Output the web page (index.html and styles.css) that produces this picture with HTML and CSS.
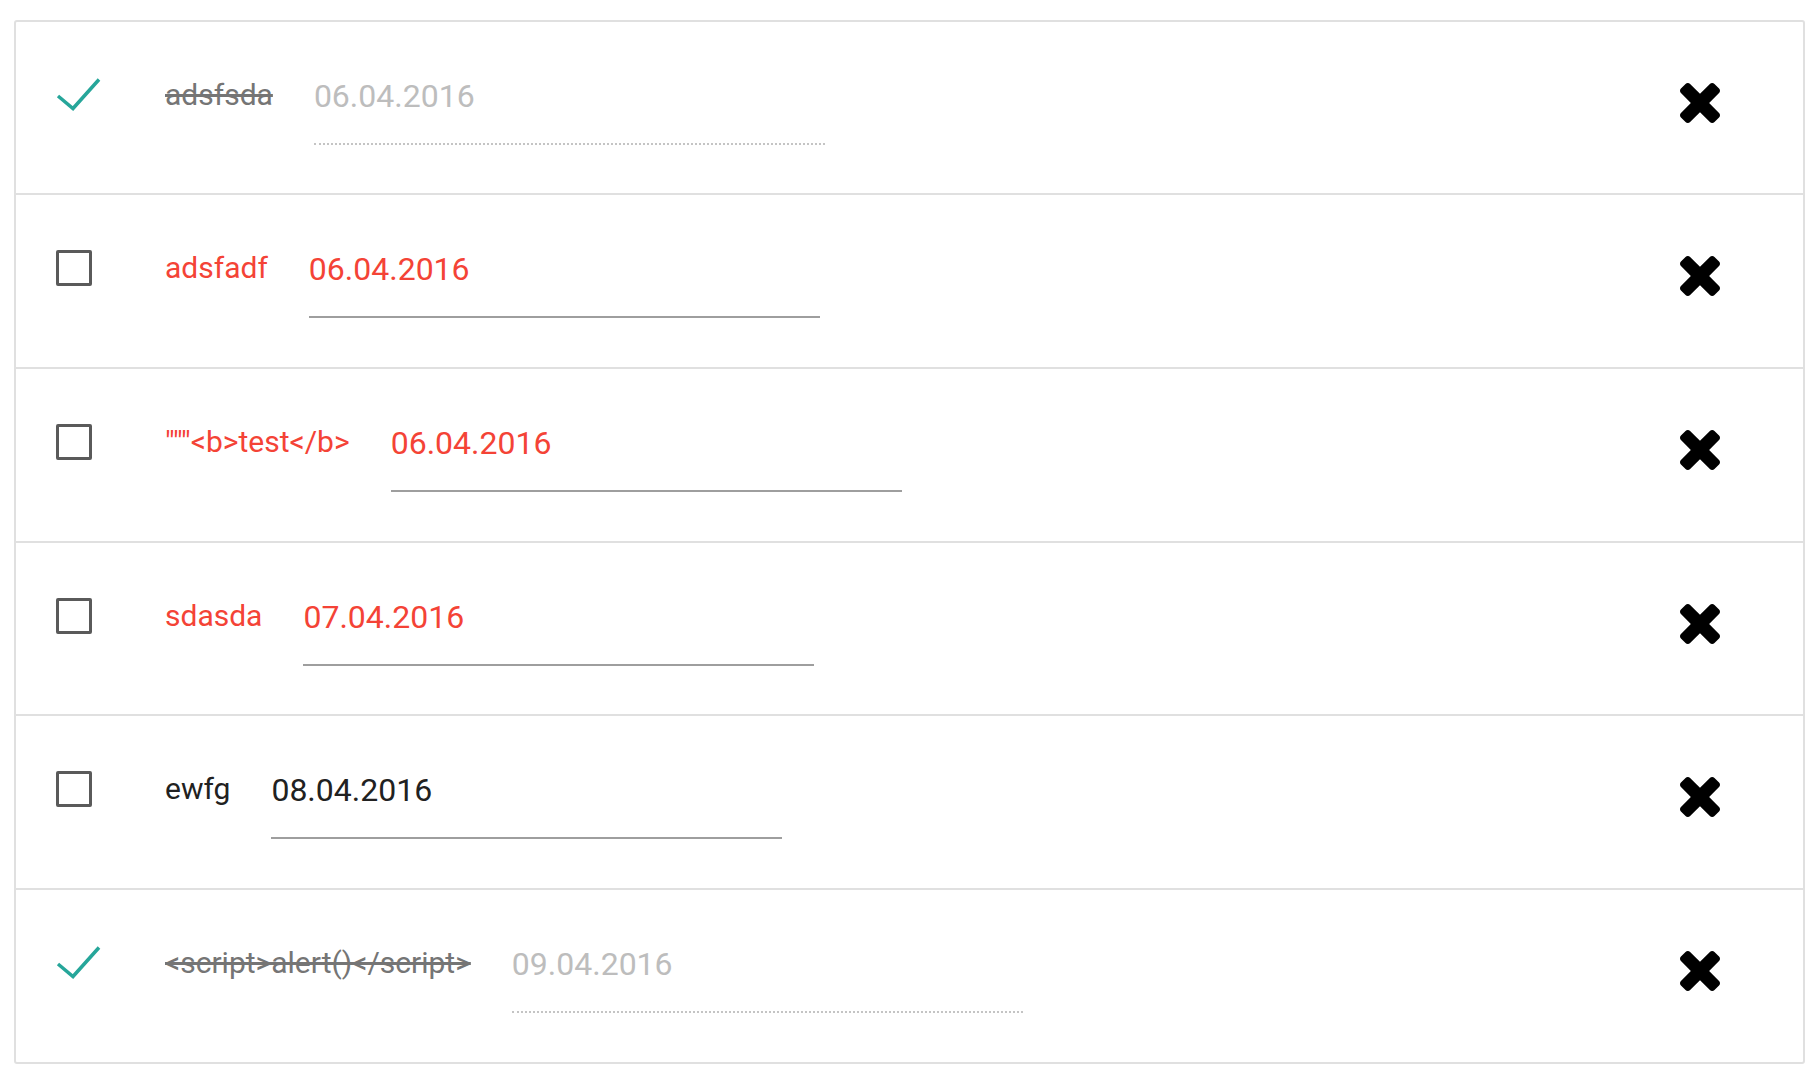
FILE: index.html
```html
<!DOCTYPE html>
<html lang="en">
<head>
<meta charset="utf-8">
<title>Todo list</title>
<link rel="stylesheet" href="styles.css">
</head>
<body>
<ul class="todo-list">
  <li class="todo done">
    <div class="toggle">
      <svg class="check" width="48" height="36" viewBox="0 0 48 36"><polyline points="4,20 19,32.5 45,3.5" fill="none" stroke="#26a69a" stroke-width="3.5" stroke-linejoin="miter"/></svg>
    </div>
    <span class="title">adsfsda</span>
    <div class="date-field"><span class="date">06.04.2016</span></div>
    <button class="remove" type="button" aria-label="Remove"><svg width="40" height="40" viewBox="110 366 1188 1188"><path d="M1298 1322q0 40-28 68l-136 136q-28 28-68 28t-68-28l-294-294-294 294q-28 28-68 28t-68-28l-136-136q-28-28-28-68t28-68l294-294-294-294q-28-28-28-68t28-68l136-136q28-28 68-28t68 28l294 294 294-294q28-28 68-28t68 28l136 136q28 28 28 68t-28 68l-294 294 294 294q28 28 28 68z"/></svg></button>
  </li>
  <li class="todo overdue">
    <div class="toggle"><span class="box"></span></div>
    <span class="title">adsfadf</span>
    <div class="date-field"><span class="date">06.04.2016</span></div>
    <button class="remove" type="button" aria-label="Remove"><svg width="40" height="40" viewBox="110 366 1188 1188"><path d="M1298 1322q0 40-28 68l-136 136q-28 28-68 28t-68-28l-294-294-294 294q-28 28-68 28t-68-28l-136-136q-28-28-28-68t28-68l294-294-294-294q-28-28-28-68t28-68l136-136q28-28 68-28t68 28l294 294 294-294q28-28 68-28t68 28l136 136q28 28 28 68t-28 68l-294 294 294 294q28 28 28 68z"/></svg></button>
  </li>
  <li class="todo overdue">
    <div class="toggle"><span class="box"></span></div>
    <span class="title">"""&lt;b&gt;test&lt;/b&gt;</span>
    <div class="date-field"><span class="date">06.04.2016</span></div>
    <button class="remove" type="button" aria-label="Remove"><svg width="40" height="40" viewBox="110 366 1188 1188"><path d="M1298 1322q0 40-28 68l-136 136q-28 28-68 28t-68-28l-294-294-294 294q-28 28-68 28t-68-28l-136-136q-28-28-28-68t28-68l294-294-294-294q-28-28-28-68t28-68l136-136q28-28 68-28t68 28l294 294 294-294q28-28 68-28t68 28l136 136q28 28 28 68t-28 68l-294 294 294 294q28 28 28 68z"/></svg></button>
  </li>
  <li class="todo overdue">
    <div class="toggle"><span class="box"></span></div>
    <span class="title">sdasda</span>
    <div class="date-field"><span class="date">07.04.2016</span></div>
    <button class="remove" type="button" aria-label="Remove"><svg width="40" height="40" viewBox="110 366 1188 1188"><path d="M1298 1322q0 40-28 68l-136 136q-28 28-68 28t-68-28l-294-294-294 294q-28 28-68 28t-68-28l-136-136q-28-28-28-68t28-68l294-294-294-294q-28-28-28-68t28-68l136-136q28-28 68-28t68 28l294 294 294-294q28-28 68-28t68 28l136 136q28 28 28 68t-28 68l-294 294 294 294q28 28 28 68z"/></svg></button>
  </li>
  <li class="todo">
    <div class="toggle"><span class="box"></span></div>
    <span class="title">ewfg</span>
    <div class="date-field"><span class="date">08.04.2016</span></div>
    <button class="remove" type="button" aria-label="Remove"><svg width="40" height="40" viewBox="110 366 1188 1188"><path d="M1298 1322q0 40-28 68l-136 136q-28 28-68 28t-68-28l-294-294-294 294q-28 28-68 28t-68-28l-136-136q-28-28-28-68t28-68l294-294-294-294q-28-28-28-68t28-68l136-136q28-28 68-28t68 28l294 294 294-294q28-28 68-28t68 28l136 136q28 28 28 68t-28 68l-294 294 294 294q28 28 28 68z"/></svg></button>
  </li>
  <li class="todo done">
    <div class="toggle">
      <svg class="check" width="48" height="36" viewBox="0 0 48 36"><polyline points="4,20 19,32.5 45,3.5" fill="none" stroke="#26a69a" stroke-width="3.5" stroke-linejoin="miter"/></svg>
    </div>
    <span class="title">&lt;script&gt;alert()&lt;/script&gt;</span>
    <div class="date-field"><span class="date">09.04.2016</span></div>
    <button class="remove" type="button" aria-label="Remove"><svg width="40" height="40" viewBox="110 366 1188 1188"><path d="M1298 1322q0 40-28 68l-136 136q-28 28-68 28t-68-28l-294-294-294 294q-28 28-68 28t-68-28l-136-136q-28-28-28-68t28-68l294-294-294-294q-28-28-28-68t28-68l136-136q28-28 68-28t68 28l294 294 294-294q28-28 68-28t68 28l136 136q28 28 28 68t-28 68l-294 294 294 294q28 28 28 68z"/></svg></button>
  </li>
</ul>
</body>
</html>
```

FILE: styles.css
```css
html, body {
  margin: 0;
  padding: 0;
  background: #ffffff;
}

body {
  font-family: Roboto, "Noto Sans", "Liberation Sans", sans-serif;
  color: #212121;
}

.todo-list {
  list-style: none;
  margin: 20px 0 0 14px;
  padding: 0;
  width: 1791px;
  box-sizing: border-box;
  border: 2px solid #e0e0e0;
  border-radius: 3px;
}

.todo {
  display: flex;
  align-items: flex-start;
  height: 174px;
  padding-left: 40px;
  box-sizing: border-box;
  border-bottom: 2px solid #e0e0e0;
}

.todo:nth-child(1),
.todo:nth-child(4) {
  height: 173px;
}

.todo:last-child {
  height: 172px;
  border-bottom: none;
}

.toggle {
  flex: none;
  width: 109px;
  padding-top: 55px;
}

.box {
  display: block;
  width: 36px;
  height: 36px;
  box-sizing: border-box;
  border: 3px solid #5a5a5a;
  border-radius: 2px;
}

.check {
  display: block;
  margin: -1px 0 0 -2px;
}

.title {
  flex: none;
  margin-top: 55px;
  font-size: 30px;
  line-height: 36px;
  white-space: nowrap;
  color: #212121;
}

.date-field {
  flex: none;
  width: 511px;
  margin-top: 55px;
  margin-left: 41px;
  padding-bottom: 28px;
  border-bottom: 2px solid #9e9e9e;
}

.date {
  display: block;
  font-size: 32px;
  line-height: 38px;
  white-space: nowrap;
  color: #212121;
}

.overdue .title,
.overdue .date {
  color: #f44336;
}

.done .title {
  color: #757575;
  text-decoration: line-through;
}

.done .date {
  color: #bdbdbd;
}

.done .date-field {
  border-bottom: 2px dotted #c4c4c4;
}

.remove {
  flex: none;
  margin: 61px 83px 0 auto;
  padding: 0;
  width: 40px;
  height: 40px;
  border: none;
  background: transparent;
  cursor: pointer;
}

.remove svg {
  display: block;
  fill: #000000;
}
```
